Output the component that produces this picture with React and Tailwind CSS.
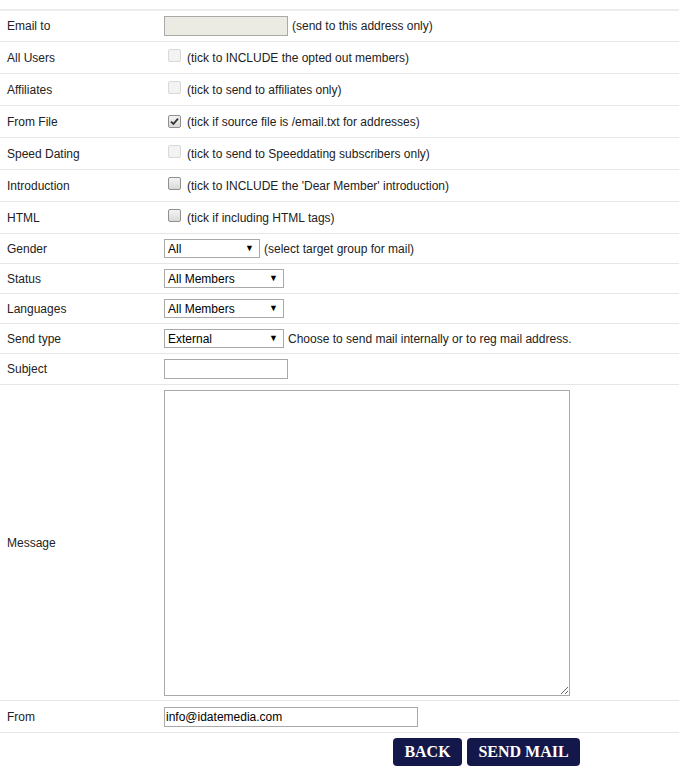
import { useState } from 'react'

const font = { fontFamily: '"Liberation Sans", Arial, sans-serif' }
const serif = { fontFamily: '"Liberation Serif", "Times New Roman", serif' }

function Box({ checked, disabled }) {
  return (
    <span className={`inline-flex items-center justify-center w-[13px] h-[13px] rounded-[2px] border ${disabled ? 'border-[#d8d8d8] bg-[#f3f3f3]' : 'border-[#8f8f8f] bg-gradient-to-b from-[#f4f4f4] to-[#d9d9d9]'}`}>
      {checked && (
        <svg width="9" height="9" viewBox="0 0 9 9">
          <path d="M1 4.6 L3.4 7 L8 1.6" fill="none" stroke="#333" strokeWidth="1.8" />
        </svg>
      )}
    </span>
  )
}

function Select({ value, w }) {
  return (
    <div className={`relative ${w} h-[19px]`}>
      <select defaultValue={value}
        className="appearance-none w-full h-full border border-[#a9a9a9] bg-white pl-[3px] text-[12px] text-black leading-none outline-none" style={font}>
        <option>{value}</option>
      </select>
      <span className="pointer-events-none absolute right-[6px] top-[3px] text-[9px] text-black">▼</span>
    </div>
  )
}

const Row = ({ label, h = 'h-[32px]', children }) => (
  <div className={`flex items-center border-b border-[#e6e6e6] ${h}`}>
    <div className="w-[164px] pl-[7px] shrink-0">{label}</div>
    <div className="flex items-center flex-1">{children}</div>
  </div>
)

export default function App() {
  const [subject, setSubject] = useState('')
  const [from, setFrom] = useState('info@idatemedia.com')

  const checks = [
    ['All Users', '(tick to INCLUDE the opted out members)', false, true],
    ['Affiliates', '(tick to send to affiliates only)', false, true],
    ['From File', '(tick if source file is /email.txt for addresses)', true, false],
    ['Speed Dating', '(tick to send to Speeddating subscribers only)', false, true],
    ['Introduction', "(tick to INCLUDE the 'Dear Member' introduction)", false, false],
    ['HTML', '(tick if including HTML tags)', false, false],
  ]

  return (
    <div className="min-h-screen bg-white text-[12px] text-[#222] pt-[9px]" style={font}>
      <div className="border-t-2 border-[#ececec]">
        <Row label="Email to" h="h-[31px]">
          <input disabled className="w-[124px] h-[20px] border border-[#a9a9a9] bg-[#ebebe4]" />
          <span className="ml-[4px]">(send to this address only)</span>
        </Row>
        {checks.map(([l, t, c, d]) => (
          <Row key={l} label={l}>
            <span className="ml-[4px]"><Box checked={c} disabled={d} /></span>
            <span className="ml-[6px]">{t}</span>
          </Row>
        ))}
        <Row label="Gender" h="h-[30px]">
          <Select value="All" w="w-[96px]" />
          <span className="ml-[4px]">(select target group for mail)</span>
        </Row>
        <Row label="Status" h="h-[30px]">
          <Select value="All Members" w="w-[120px]" />
        </Row>
        <Row label="Languages" h="h-[30px]">
          <Select value="All Members" w="w-[120px]" />
        </Row>
        <Row label="Send type" h="h-[30px]">
          <Select value="External" w="w-[120px]" />
          <span className="ml-[4px]">Choose to send mail internally or to reg mail address.</span>
        </Row>
        <Row label="Subject" h="h-[31px]">
          <input value={subject} onChange={e => setSubject(e.target.value)}
            className="w-[124px] h-[20px] border border-[#a9a9a9] bg-white px-[3px] outline-none" />
        </Row>
        <Row label="Message" h="h-[316px]">
          <textarea className="w-[406px] h-[306px] border border-[#a9a9a9] bg-white outline-none" />
        </Row>
        <Row label="From">
          <input value={from} onChange={e => setFrom(e.target.value)}
            className="w-[254px] h-[20px] border border-[#a9a9a9] bg-white px-[1px] text-[12px] text-black outline-none" style={font} />
        </Row>
      </div>
      <div className="flex gap-[5px] pl-[393px] pt-[5px]">
        <button className="w-[69px] h-[28px] rounded-[4px] bg-[#14174a] text-white font-bold text-[16px] leading-none" style={serif}>BACK</button>
        <button className="w-[113px] h-[28px] rounded-[4px] bg-[#14174a] text-white font-bold text-[16px] leading-none" style={serif}>SEND MAIL</button>
      </div>
    </div>
  )
}
